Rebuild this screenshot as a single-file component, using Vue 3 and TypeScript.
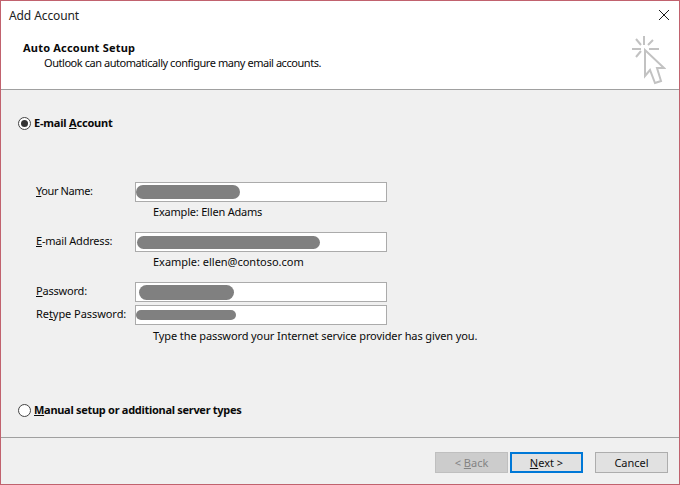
<script setup lang="ts">
interface Field { before: string; key: string; after: string; bar: number; pad: number; barH: number; fit: string; hint?: string; hintFit?: string }
const nameField: Field = { before: '', key: 'Y', after: 'our Name:', bar: 104, pad: 0, barH: 14, fit: 'tighter', hint: 'Example: Ellen Adams', hintFit: 'hint-tight' }
const mailField: Field = { before: '', key: 'E', after: '-mail Address:', bar: 183, pad: 1, barH: 13, fit: 'tight', hint: 'Example: ellen@contoso.com', hintFit: 'hint-loose' }
const passField: Field = { before: '', key: 'P', after: 'assword:', bar: 95, pad: 3, barH: 15, fit: 'tight' }
const retypeField: Field = { before: 'Re', key: 't', after: 'ype Password:', bar: 100, pad: 0, barH: 10, fit: 'slight' }
const groups: Field[][] = [[nameField], [mailField], [passField, retypeField]]
</script>

<template>
  <div class="window">
    <div class="head">
      <div class="titlebar">
        <span class="title">Add Account</span>
        <svg class="close" width="12" height="12" viewBox="0 0 12 12">
          <path d="M1 1L11 11M11 1L1 11" stroke="#1a1a1a" stroke-width="1" fill="none" />
        </svg>
      </div>
      <div class="banner">
        <div class="banner-text">
          <div class="banner-title">Auto Account Setup</div>
          <div class="banner-sub">Outlook can automatically configure many email accounts.</div>
        </div>
        <svg class="wizard" width="36" height="52" viewBox="0 0 36 52" fill="none" stroke="#c2c2c2" stroke-width="2">
          <path d="M14 2V11M2 15H11M19 15H29M6 5L11 11M23 6L18 11M6 23L11 17" />
          <path d="M15 16V42L20 36L25 49L31 47L27 34H34Z" fill="#fff" />
        </svg>
      </div>
    </div>

    <div class="body">
      <label class="radio-row first">
        <span class="radio checked"><span class="dot"></span></span>
        <span class="radio-label email">E-mail <u>A</u>ccount</span>
      </label>

      <div class="form">
        <div v-for="(group, g) in groups" :key="g" class="group">
          <div v-for="f in group" :key="f.after" class="row">
            <span class="label" :class="f.fit">{{ f.before }}<u>{{ f.key }}</u>{{ f.after }}</span>
            <div class="input" :style="{ paddingLeft: f.pad + 'px' }">
              <span class="redact" :style="{ width: f.bar + 'px', height: f.barH + 'px' }"></span>
            </div>
          </div>
          <div v-if="group[0].hint" class="hint" :class="group[0].hintFit">{{ group[0].hint }}</div>
        </div>
        <div class="hint hint-pass">Type the password your Internet service provider has given you.</div>
      </div>

      <label class="radio-row last">
        <span class="radio"></span>
        <span class="radio-label manual"><u>M</u>anual setup or additional server types</span>
      </label>
    </div>

    <div class="footer">
      <button class="btn disabled">&lt; <u>B</u>ack</button>
      <button class="btn primary"><u>N</u>ext &gt;</button>
      <button class="btn cancel">Cancel</button>
    </div>
  </div>
</template>

<style>
html, body { margin: 0; padding: 0; background: #f0f0f0; }
</style>

<style scoped>
.window {
  width: 680px;
  height: 485px;
  box-sizing: border-box;
  border: 1px solid #c1626e;
  display: flex;
  flex-direction: column;
  background: #f0f0f0;
  color: #0a0a0a;
  font-family: "Noto Sans", "DejaVu Sans", sans-serif;
  font-size: 11px;
  overflow: hidden;
}
.head {
  height: 89px;
  box-sizing: border-box;
  background: #fff;
  border-bottom: 1px solid #a0a0a0;
  display: flex;
  flex-direction: column;
  flex: none;
}
.titlebar {
  height: 30px;
  box-sizing: border-box;
  display: flex;
  align-items: center;
  justify-content: space-between;
  padding: 0 9px 2px 8px;
  flex: none;
}
.title { font-size: 12px; color: #222; letter-spacing: -0.1px; }
.close { display: block; }
.banner {
  flex: 1;
  display: flex;
  justify-content: space-between;
  padding: 9px 13px 0 22px;
  min-height: 0;
}
.banner-title { font-weight: 700; line-height: 15px; letter-spacing: 0.2px; }
.banner-sub { line-height: 15px; padding-left: 21px; letter-spacing: -0.45px; }
.wizard { margin-top: -6px; display: block; flex: none; }
.body {
  flex: 1;
  display: flex;
  flex-direction: column;
  border-bottom: 1px solid #a0a0a0;
  padding-left: 17px;
}
.radio-row {
  display: flex;
  align-items: center;
  gap: 3px;
  height: 14px;
  font-weight: 700;
}
.radio-row.first { margin-top: 26px; }
.radio-row.last { margin-top: 57px; }
.radio-label { padding-bottom: 2px; }
.email { letter-spacing: -0.2px; }
.manual { letter-spacing: -0.29px; }
.radio {
  width: 11px;
  height: 11px;
  border: 1px solid #444;
  border-radius: 50%;
  background: #fff;
  display: flex;
  align-items: center;
  justify-content: center;
  flex: none;
}
.dot { width: 7px; height: 7px; border-radius: 50%; background: #333; }
.form { margin-top: 52px; padding-left: 18px; flex: none; }
.group { margin-bottom: 10px; }
.row { display: flex; align-items: center; height: 20px; }
.row + .row { margin-top: 3px; }
.label { width: 99px; flex: none; padding-bottom: 3px; }
.label.tight { letter-spacing: -0.2px; }
.label.tighter { letter-spacing: -0.4px; }
.label.slight { letter-spacing: -0.06px; }
.input {
  width: 252px;
  height: 20px;
  box-sizing: border-box;
  border: 1px solid #ababab;
  background: #fff;
  display: flex;
  align-items: center;
}
.redact { display: block; background: #808080; border-radius: 8px; }
.hint { padding-left: 117px; line-height: 15px; margin-top: 2px; height: 18px; letter-spacing: -0.1px; }
.hint-tight { letter-spacing: -0.2px; }
.hint-loose { letter-spacing: -0.02px; }
.group:nth-child(3) { margin-bottom: 0; }
.hint-pass { margin-top: 3px; }
.footer {
  height: 46px;
  flex: none;
  box-sizing: border-box;
  display: flex;
  justify-content: flex-end;
  padding: 14px 11px 0 0;
}
.btn {
  width: 73px;
  height: 21px;
  box-sizing: border-box;
  border: 1px solid #adadad;
  background: #e1e1e1;
  font: inherit;
  color: #111;
  padding: 0;
}
.btn.disabled { background: #cccccc; border-color: #bfbfbf; color: #838383; margin-right: 2px; }
.btn.primary { border: 2px solid #0078d7; background: #e1e1e1; }
.btn.cancel { margin-left: 12px; }
</style>
